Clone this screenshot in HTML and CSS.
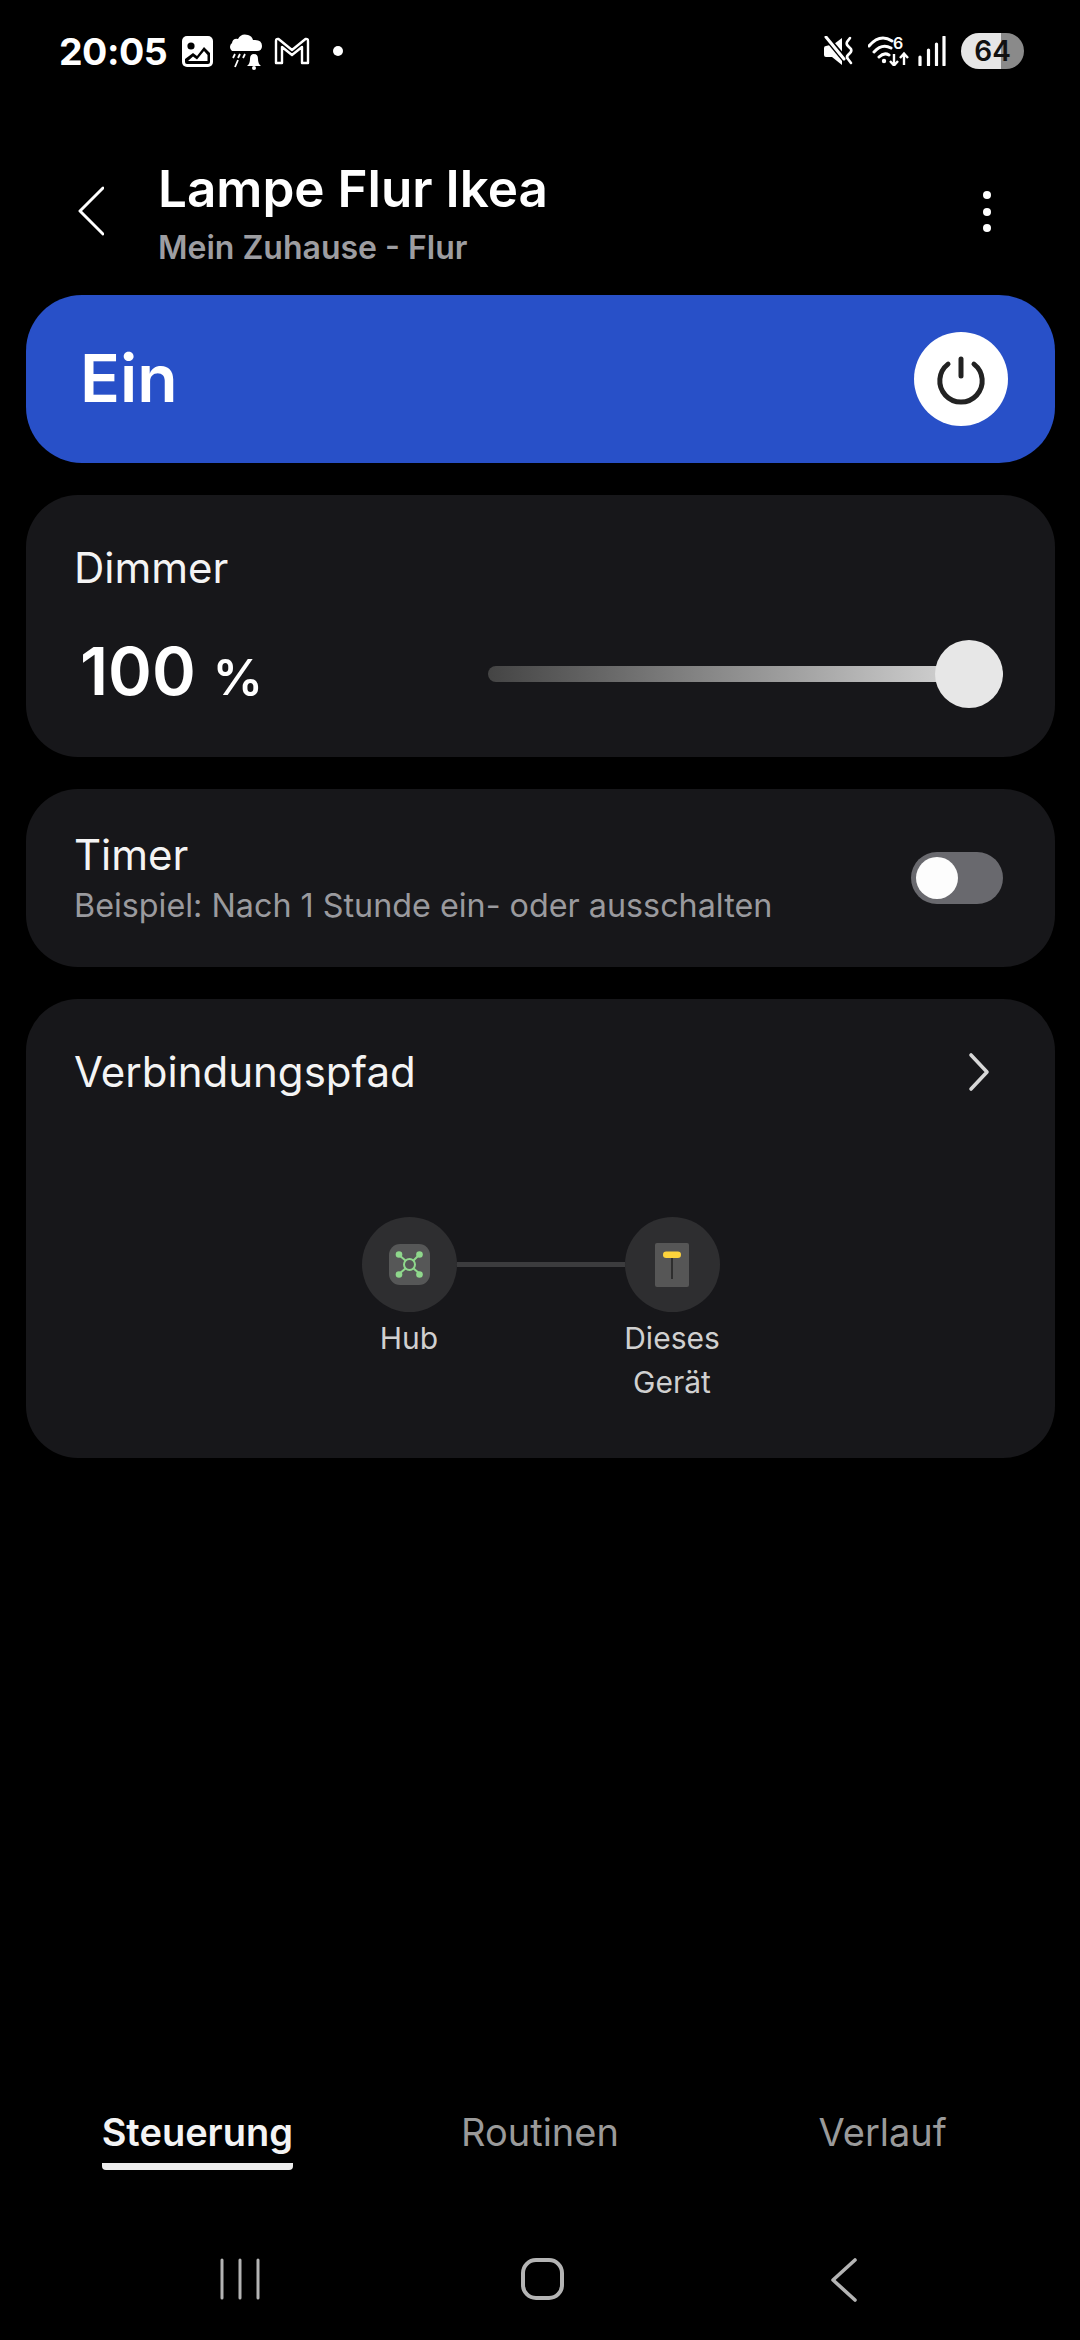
FILE: index.html
```html
<!DOCTYPE html>
<html lang="de">
<head>
    <meta charset="UTF-8">
    <meta name="viewport" content="width=device-width, initial-scale=1.0">
    <title>Lampe Flur Ikea</title>
    <link rel="stylesheet" href="styles.css">
</head>
<body>
    <div class="status">
        <span class="time">20:05</span>
        <svg class="ic-image" width="31" height="31" viewBox="0 0 31 31">
            <rect width="31" height="31" rx="5" fill="#fff"/>
            <circle cx="9" cy="10" r="3.6" fill="#000"/>
            <path d="M3 26 L3 23 L11 17 L15 20 L22 11 L28 17 L28 26 Q28 28 26 28 L5 28 Q3 28 3 26Z" fill="#000"/>
            <path d="M6 25 L11 20.5 L15 23.5 L22 15 L25.5 19 L25.5 25Z" fill="#fff"/>
        </svg>
        <svg class="ic-weather" width="37" height="37" viewBox="0 0 37 37">
            <path d="M6 18 A5 5 0 0 1 6 10 Q7 5 12 6 Q15 0 22 2 Q26 3 27 7 Q36 6 36 13 Q36 18 31 18Z" fill="#fff"/>
            <path d="M9 21 L7 25 M14 21 L12 25 M19 21 L17 25 M12 27 L9 34" stroke="#fff" stroke-width="1.8" fill="none"/>
            <path d="M21 33 Q24 31 24 26 Q24 21 28 21 Q32 21 32 26 Q32 31 35 33Z" fill="#fff"/>
            <circle cx="28" cy="35" r="2" fill="#fff"/>
        </svg>
        <svg class="ic-mail" width="36" height="28" viewBox="0 0 36 28">
            <path d="M2 26 L2 4 Q2 1.500 4.500 2 L18 13 L31.500 2 Q34 1.500 34 4 L34 26 L28 26 L28 10 L18 18 L8 10 L8 26Z" fill="none" stroke="#fff" stroke-width="2.4" stroke-linejoin="round"/>
        </svg>
        <span class="dot"></span>
        <span class="status-gap"></span>
        <svg class="ic-mute" width="30" height="30" viewBox="0 0 30 30">
            <path d="M10 8 L18 2 L18 29 L8 21 L2 21 Q0 21 0 19 L0 12 Q0 10 2 10 Z" fill="#fff"/>
            <path d="M2 1 L22 25" stroke="#000" stroke-width="6"/>
            <path d="M2 1 L20 23" stroke="#fff" stroke-width="3" stroke-linecap="round"/>
            <path d="M26 2 L23 6 Q22 8 24 10 L27 13 Q28 15 26 17 L24 19 Q22 21 24 23 L27 27" stroke="#fff" stroke-width="2.6" fill="none" stroke-linecap="round"/>
        </svg>
        <svg class="ic-wifi" width="42" height="36" viewBox="0 -6 42 36">
            <path d="M1 10 Q12 -3 24 5 M6 16 Q14 7 23 12 M11 21 Q16 16 21 19" stroke="#fff" stroke-width="3" fill="none" stroke-linecap="round"/>
            <circle cx="16" cy="25" r="2.200" fill="#fff"/>
            <text x="25" y="13" class="wifi-six">6</text>
            <path d="M26 18 L26 29 M22 25 L26 29.500 L30 25 M36 29 L36 18 M32 22 L36 17.500 L40 22" stroke="#fff" stroke-width="2.400" fill="none"/>
        </svg>
        <svg class="ic-signal" width="28" height="30" viewBox="0 0 28 30">
            <path d="M2 21 V29 M10.500 14 V29 M18.500 8 V29 M26 1 V29" stroke="#fff" stroke-width="3.200" stroke-linecap="round"/>
        </svg>
        <span class="battery">64</span>
    </div>

    <header class="header">
        <svg class="back" width="26" height="50" viewBox="0 0 26 50">
            <path d="M25 2 L2 25 L25 48" fill="none" stroke="#fff" stroke-width="3" stroke-linecap="round" stroke-linejoin="round"/>
        </svg>
        <div class="title-block">
            <h1>Lampe Flur Ikea</h1>
            <p>Mein Zuhause - Flur</p>
        </div>
        <div class="more"><span></span><span></span><span></span></div>
    </header>

    <main class="cards">
        <section class="power-card">
            <span class="power-label">Ein</span>
            <div class="power-btn">
                <svg width="52" height="54" viewBox="0 0 52 54">
                    <path d="M13 12.100 A21.200 21.200 0 1 0 39 12.100" fill="none" stroke="#222" stroke-width="5" stroke-linecap="round"/>
                    <path d="M26 7 V24" stroke="#222" stroke-width="5" stroke-linecap="round"/>
                </svg>
            </div>
        </section>

        <section class="card dimmer">
            <div class="card-title">Dimmer</div>
            <div class="dimmer-row">
                <div class="value">100 <small>%</small></div>
                <div class="slider"><div class="thumb"></div></div>
            </div>
        </section>

        <section class="card timer">
            <div class="timer-text">
                <div class="card-title">Timer</div>
                <div class="card-sub">Beispiel: Nach 1 Stunde ein- oder ausschalten</div>
            </div>
            <div class="toggle"><div class="knob"></div></div>
        </section>

        <section class="card conn">
            <div class="conn-head">
                <div class="card-title">Verbindungspfad</div>
                <svg width="22" height="40" viewBox="0 0 22 40">
                    <path d="M3 3 L19 20 L3 37" fill="none" stroke="#d8d8d8" stroke-width="3.600" stroke-linecap="round" stroke-linejoin="round"/>
                </svg>
            </div>
            <div class="path">
                <div class="node">
                    <div class="node-circle">
                        <svg width="41" height="41" viewBox="0 0 41 41">
                            <rect width="41" height="41" rx="11" fill="#565757"/>
                            <path d="M10 11 L17 17 M31 10 L24 17 M10 30 L17 24 M31 30 L24 24" stroke="#8fd88c" stroke-width="2"/>
                            <circle cx="20.500" cy="20.500" r="5.500" fill="none" stroke="#8fd88c" stroke-width="2"/>
                            <circle cx="10" cy="10.500" r="3.300" fill="#8fd88c"/>
                            <circle cx="30.500" cy="10.500" r="3.300" fill="#8fd88c"/>
                            <circle cx="10" cy="30.500" r="3.300" fill="#8fd88c"/>
                            <circle cx="30.500" cy="30.500" r="3.300" fill="#8fd88c"/>
                        </svg>
                    </div>
                    <div class="node-label">Hub</div>
                </div>
                <div class="link"></div>
                <div class="node">
                    <div class="node-circle">
                        <svg width="34" height="44" viewBox="0 0 34 44">
                            <rect width="34" height="44" rx="2" fill="#565656"/>
                            <path d="M17 14 V36" stroke="#222" stroke-width="1.500"/>
                            <rect x="8" y="8.500" width="18" height="6.500" rx="3.200" fill="#fdd33c"/>
                        </svg>
                    </div>
                    <div class="node-label">Dieses Gerät</div>
                </div>
            </div>
        </section>
    </main>

    <nav class="tabs">
        <div class="tab active"><span>Steuerung</span></div>
        <div class="tab"><span>Routinen</span></div>
        <div class="tab"><span>Verlauf</span></div>
    </nav>

    <div class="sysnav">
        <div class="sys-item">
            <svg width="40" height="42" viewBox="0 0 40 42">
                <path d="M2 2 V40 M20 2 V40 M38 2 V40" stroke="#b4b4b4" stroke-width="3" stroke-linecap="round"/>
            </svg>
        </div>
        <div class="sys-item"><div class="home-btn"></div></div>
        <div class="sys-item">
            <svg width="26" height="44" viewBox="0 0 26 44">
                <path d="M24 2 L2 22 L24 42" fill="none" stroke="#b4b4b4" stroke-width="3.600" stroke-linecap="round" stroke-linejoin="round"/>
            </svg>
        </div>
    </div>
</body>
</html>
```

FILE: styles.css
```css
* {
    box-sizing: border-box;
}

body {
    margin: 0;
    width: 1080px;
    height: 2340px;
    background-color: #000;
    color: #fff;
    font-family: Inter, Roboto, sans-serif;
    display: flex;
    flex-direction: column;
    overflow: hidden;
}

/* status bar */
.status {
    height: 102px;
    padding: 0 56px 0 59px;
    display: flex;
    align-items: center;
}

.time {
    font-size: 37.500px;
    font-weight: 700;
    width: 123px;
    letter-spacing: -0.5px;
}

.ic-weather {
    margin-left: 13px;
}

.ic-mail {
    margin-left: 11px;
}

.dot {
    width: 10px;
    height: 10px;
    border-radius: 50%;
    background-color: #fff;
    margin-left: 23px;
}

.status-gap {
    flex: 1;
}

.ic-wifi {
    margin-left: 14px;
    margin-top: -6px;
}

.wifi-six {
    font-size: 16px;
    font-weight: 600;
    fill: #fff;
}

.ic-signal {
    margin-left: 8px;
}

.battery {
    width: 63px;
    height: 36px;
    margin-left: 15px;
    border-radius: 18px;
    background: linear-gradient(90deg, #e6e6e6 63%, #8a8a8a 63%);
    color: #111;
    font-size: 28px;
    font-weight: 600;
    line-height: 36px;
    text-align: center;
}

/* header */
.header {
    height: 193px;
    padding: 0 89px 0 78px;
    display: flex;
    align-items: flex-start;
}

.back {
    margin-top: 84px;
}

.title-block {
    flex: 1;
    margin-left: 54px;
    margin-top: 56px;
}

.title-block h1 {
    margin: 0;
    font-size: 51.200px;
    font-weight: 600;
    line-height: 60px;
}

.title-block p {
    margin: 9px 0 0;
    font-size: 32px;
    font-weight: 600;
    line-height: 42px;
    color: #9d9da1;
}

.more {
    display: flex;
    flex-direction: column;
    gap: 8.500px;
    margin-top: 89px;
}

.more span {
    width: 8px;
    height: 8px;
    border-radius: 50%;
    background-color: #fff;
}

/* cards */
.cards {
    flex: 1;
    padding: 0 25px 0 26px;
    display: flex;
    flex-direction: column;
    gap: 32px;
}

.power-card {
    height: 168px;
    padding: 0 47px 0 54px;
    border-radius: 56px;
    background-color: #2850c8;
    display: flex;
    align-items: center;
    justify-content: space-between;
}

.power-label {
    font-size: 66px;
    font-weight: 600;
    margin-bottom: 3px;
}

.power-btn {
    width: 94px;
    height: 94px;
    border-radius: 50%;
    background-color: #fff;
    display: flex;
    align-items: center;
    justify-content: center;
}

.card {
    border-radius: 52px;
    background-color: #17171a;
    padding: 0 52px 0 48px;
}

.card-title {
    font-size: 42px;
    line-height: 48px;
    color: #f4f4f4;
}

.card-sub {
    margin-top: 5px;
    font-size: 32.300px;
    line-height: 44px;
    color: #9a9a9e;
}

.timer-text {
    padding-top: 2px;
}

.dimmer {
    height: 262px;
    padding-top: 49px;
}

.dimmer-row {
    margin-top: 40px;
    display: flex;
    align-items: center;
    justify-content: space-between;
}

.value {
    margin-left: 6px;
    font-size: 66.500px;
    font-weight: 600;
    line-height: 78px;
}

.value small {
    font-size: 50px;
    font-weight: 600;
}

.slider {
    width: 515px;
    height: 16px;
    border-radius: 8px;
    background: linear-gradient(90deg, #444 0%, #d8d8d8 95%);
    position: relative;
}

.thumb {
    position: absolute;
    right: 0;
    top: -26px;
    width: 68px;
    height: 68px;
    border-radius: 50%;
    background-color: #e7e7e7;
}

.timer {
    height: 178px;
    display: flex;
    align-items: center;
    justify-content: space-between;
}

.toggle {
    width: 92px;
    height: 52px;
    padding: 5px;
    border-radius: 26px;
    background-color: #69696e;
}

.knob {
    width: 42px;
    height: 42px;
    border-radius: 50%;
    background-color: #fdfdfd;
}

.conn {
    height: 459px;
    padding-top: 49px;
}

.conn-head {
    display: flex;
    align-items: center;
    justify-content: space-between;
    padding-right: 13px;
}

.path {
    margin-top: 121px;
    margin-left: 4px;
    display: flex;
    justify-content: center;
}

.node {
    width: 95px;
    display: flex;
    flex-direction: column;
    align-items: center;
}

.node-circle {
    width: 95px;
    height: 95px;
    border-radius: 50%;
    background-color: #2e2e30;
    display: flex;
    align-items: center;
    justify-content: center;
}

.node-label {
    margin-top: 4px;
    font-size: 30px;
    line-height: 44px;
    text-align: center;
    color: #d0d0d0;
}

.link {
    width: 168px;
    height: 5px;
    margin-top: 45px;
    background-color: #3c3c3e;
}

/* bottom tabs */
.tabs {
    height: 70px;
    padding: 0 26px;
    display: grid;
    grid-template-columns: repeat(3, 1fr);
}

.tab {
    text-align: center;
    font-size: 38px;
    color: #9a9a9a;
}

.tab span {
    display: inline-block;
    line-height: 56px;
    padding-bottom: 3px;
}

.tab.active {
    color: #f4f4f4;
    font-weight: 600;
}

.tab.active span {
    border-bottom: 7px solid #ececec;
    border-radius: 4px;
}

.sysnav {
    height: 166px;
    display: flex;
    justify-content: center;
    align-items: flex-start;
    padding: 84px 0 0 4px;
}

.sys-item {
    width: 302px;
    display: flex;
    justify-content: center;
}

.home-btn {
    width: 43px;
    height: 42px;
    border: 4px solid #b4b4b4;
    border-radius: 15px;
}
```
